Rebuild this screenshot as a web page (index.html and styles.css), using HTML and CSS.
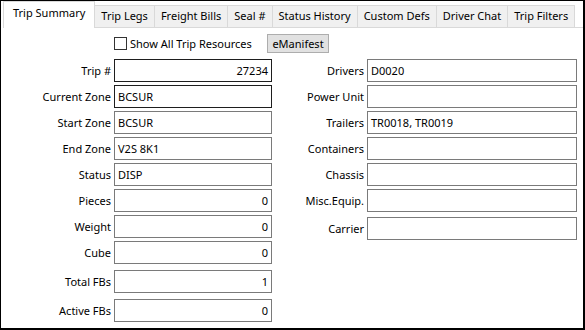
FILE: index.html
```html
<!DOCTYPE html>
<html>
<head>
<meta charset="utf-8">
<link rel="stylesheet" href="styles.css">
</head>
<body>
<div class="window">
  <div class="tabs">
    <div class="tab active">Trip Summary</div>
    <div class="tab">Trip Legs</div>
    <div class="tab">Freight Bills</div>
    <div class="tab">Seal #</div>
    <div class="tab">Status History</div>
    <div class="tab">Custom Defs</div>
    <div class="tab">Driver Chat</div>
    <div class="tab">Trip Filters</div>
  </div>
  <div class="panel">
    <div class="toolbar">
      <label class="check"><span class="box"></span><span>Show All Trip Resources</span></label>
      <button class="btn">eManifest</button>
    </div>
    <div class="form">
      <div class="col left">
        <div class="row"><span class="lbl">Trip #</span><div class="field num dark">27234</div></div>
        <div class="row"><span class="lbl">Current Zone</span><div class="field dark">BCSUR</div></div>
        <div class="row"><span class="lbl">Start Zone</span><div class="field">BCSUR</div></div>
        <div class="row"><span class="lbl">End Zone</span><div class="field">V2S 8K1</div></div>
        <div class="row"><span class="lbl">Status</span><div class="field">DISP</div></div>
        <div class="row"><span class="lbl">Pieces</span><div class="field num">0</div></div>
        <div class="row"><span class="lbl">Weight</span><div class="field num">0</div></div>
        <div class="row"><span class="lbl">Cube</span><div class="field num">0</div></div>
        <div class="row spaced"><span class="lbl">Total FBs</span><div class="field num">1</div></div>
        <div class="row spaced"><span class="lbl">Active FBs</span><div class="field num">0</div></div>
      </div>
      <div class="col right">
        <div class="row"><span class="lbl">Drivers</span><div class="field">D0020</div></div>
        <div class="row"><span class="lbl">Power Unit</span><div class="field"></div></div>
        <div class="row"><span class="lbl">Trailers</span><div class="field">TR0018, TR0019</div></div>
        <div class="row"><span class="lbl">Containers</span><div class="field"></div></div>
        <div class="row"><span class="lbl">Chassis</span><div class="field"></div></div>
        <div class="row"><span class="lbl">Misc.Equip.</span><div class="field"></div></div>
        <div class="row spaced-sm"><span class="lbl">Carrier</span><div class="field"></div></div>
      </div>
    </div>
  </div>
</div>
</body>
</html>
```
FILE: styles.css
```css
* { box-sizing: border-box; }
html, body { margin: 0; padding: 0; background: #fff; }
body {
  font-family: "Noto Sans", "Open Sans", sans-serif;
  font-size: 11px;
  color: #000;
}
.window {
  width: 585px;
  height: 330px;
  border: 1px solid #000;
  border-right-width: 2px;
  border-bottom-width: 2px;
  background: #fff;
  display: flex;
  flex-direction: column;
}
.tabs {
  display: flex;
  align-items: flex-end;
  height: 26px;
  padding-left: 2px;
  position: relative;
  z-index: 1;
}
.tab {
  height: 22px;
  line-height: 20px;
  padding: 0 6px;
  background: #f0f0f0;
  border: 1px solid #d9d9d9;
  border-bottom: none;
  margin-left: -1px;
  white-space: nowrap;
}
.tab.active {
  height: 27px;
  margin-bottom: -1px;
  background: #fff;
  margin-left: 0;
  margin-right: -1px;
  padding: 0 9px;
  line-height: 22px;
  position: relative;
  z-index: 2;
}
.tab.active + .tab { margin-left: 0; }
.panel {
  flex: 1;
  margin-left: 2px;
  border-top: 1px solid #d9d9d9;
  padding-left: 1px;
}
.toolbar {
  display: flex;
  align-items: center;
  height: 19px;
  margin: 6px 0 6px 110px;
}
.check {
  width: 153px;
  display: flex;
  align-items: center;
  gap: 3px;
}
.box {
  width: 13px;
  height: 13px;
  border: 1px solid #333;
  background: #fff;
  flex: none;
}
.btn {
  width: 62px;
  height: 19px;
  padding: 0;
  font: inherit;
  color: #000;
  background: #e1e1e1;
  border: 1px solid #adadad;
  border-radius: 0;
}
.form {
  display: flex;
}
.col {
  display: flex;
  flex-direction: column;
  gap: 3px;
}
.left { width: 268px; }
.right { width: 305px; }
.row {
  display: flex;
  align-items: center;
  gap: 3px;
  height: 23px;
}
.row.spaced { margin-top: 3px; }
.row.spaced-sm { margin-top: 2px; }
.lbl {
  flex: 1;
  text-align: right;
  white-space: nowrap;
}
.left .field { width: 158px; }
.right .field { width: 210px; }
.field {
  height: 23px;
  border: 1px solid #7a7a7a;
  padding: 0 3px;
  line-height: 21px;
  white-space: nowrap;
  flex: none;
}
.field.dark { border-color: #1e1e1e; }
.field.num { text-align: right; }
```
